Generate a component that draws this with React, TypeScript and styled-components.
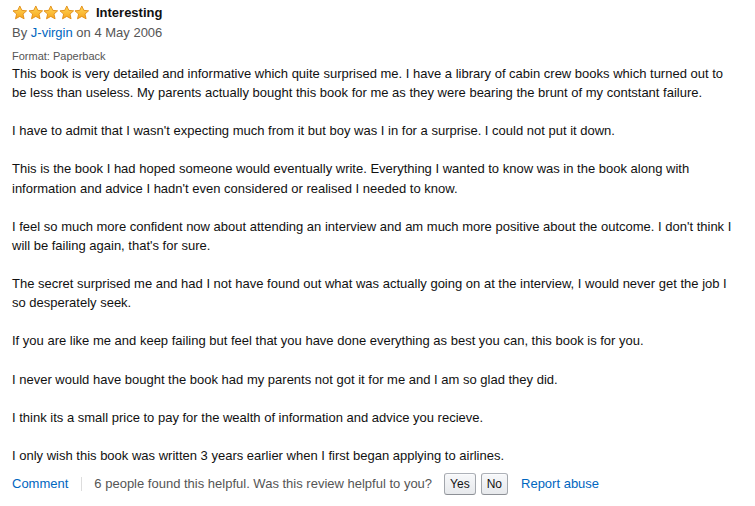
import React from "react";
import styled, { createGlobalStyle } from "styled-components";

const GlobalStyle = createGlobalStyle`
  body {
    margin: 0;
    background: #fff;
    font-family: "Liberation Sans", Arial, sans-serif;
    color: #111;
  }
`;

const Review = styled.div`
  padding: 3px 12px 0 12px;
  width: 722px;
`;

const TitleRow = styled.div`
  display: flex;
  align-items: center;
  height: 18px;
`;

const Stars = styled.div`
  display: flex;
  margin-right: 6px;
`;

const Title = styled.span`
  font-size: 13px;
  font-weight: bold;
  color: #111;
`;

const Byline = styled.div`
  font-size: 13px;
  line-height: 19px;
  color: #555;
  margin-top: 2px;
`;

const Link = styled.a`
  color: #0066c0;
  text-decoration: none;
`;

const Format = styled.div`
  font-size: 11px;
  line-height: 14px;
  color: #555;
  margin-top: 7px;
`;

const Body = styled.div`
  font-size: 13px;
  line-height: 19.1px;
  color: #111;
  margin-top: 1px;
`;

const Para = styled.p`
  margin: 0 0 19.1px 0;
  &:last-child {
    margin-bottom: 0;
  }
`;

const Footer = styled.div`
  display: flex;
  align-items: center;
  margin-top: 8px;
  font-size: 13px;
  height: 22px;
`;

const Divider = styled.span`
  width: 1px;
  height: 14px;
  background: #ddd;
  margin: 0 12px 0 13px;
`;

const Helpful = styled.span`
  color: #555;
  margin-right: 12px;
`;

const VoteButton = styled.button`
  font-family: "Liberation Sans", Arial, sans-serif;
  font-size: 12px;
  color: #111;
  height: 22px;
  padding: 0 5px;
  margin-right: 5px;
  border: 1px solid #adb1b8;
  border-color: #adb1b8 #a2a6ac #8d9096;
  border-radius: 3px;
  background: linear-gradient(to bottom, #f7f8fa, #e7e9ec);
  box-shadow: 0 1px 0 rgba(255, 255, 255, 0.6) inset;
`;

const Report = styled(Link)`
  margin-left: 8px;
`;

function Star() {
  return (
    <svg width="15.6" height="15" viewBox="0 0 16 15">
      <defs>
        <linearGradient id="sg" x1="0" y1="0" x2="0" y2="1">
          <stop offset="0" stopColor="#ffd75a" />
          <stop offset="1" stopColor="#f7a51c" />
        </linearGradient>
      </defs>
      <path
        d="M8 0.8 L10.1 5.3 L15 5.8 L11.3 9.1 L12.4 14 L8 11.5 L3.6 14 L4.7 9.1 L1 5.8 L5.9 5.3 Z"
        fill="url(#sg)"
        stroke="#e08a12"
        strokeWidth="0.9"
        strokeLinejoin="round"
      />
    </svg>
  );
}

const paragraphs = [
  "This book is very detailed and informative which quite surprised me. I have a library of cabin crew books which turned out to be less than useless. My parents actually bought this book for me as they were bearing the brunt of my contstant failure.",
  "I have to admit that I wasn't expecting much from it but boy was I in for a surprise. I could not put it down.",
  "This is the book I had hoped someone would eventually write. Everything I wanted to know was in the book along with information and advice I hadn't even considered or realised I needed to know.",
  "I feel so much more confident now about attending an interview and am much more positive about the outcome. I don't think I will be failing again, that's for sure.",
  "The secret surprised me and had I not have found out what was actually going on at the interview, I would never get the job I so desperately seek.",
  "If you are like me and keep failing but feel that you have done everything as best you can, this book is for you.",
  "I never would have bought the book had my parents not got it for me and I am so glad they did.",
  "I think its a small price to pay for the wealth of information and advice you recieve.",
  "I only wish this book was written 3 years earlier when I first began applying to airlines.",
];

export default function App() {
  return (
    <>
      <GlobalStyle />
      <Review>
        <TitleRow>
          <Stars>
            {[0, 1, 2, 3, 4].map((i) => (
              <Star key={i} />
            ))}
          </Stars>
          <Title>Interesting</Title>
        </TitleRow>
        <Byline>
          By <Link href="#">J-virgin</Link> on 4 May 2006
        </Byline>
        <Format>Format: Paperback</Format>
        <Body>
          {paragraphs.map((p, i) => (
            <Para key={i}>{p}</Para>
          ))}
        </Body>
        <Footer>
          <Link href="#">Comment</Link>
          <Divider />
          <Helpful>6 people found this helpful. Was this review helpful to you?</Helpful>
          <VoteButton>Yes</VoteButton>
          <VoteButton>No</VoteButton>
          <Report href="#">Report abuse</Report>
        </Footer>
      </Review>
    </>
  );
}
